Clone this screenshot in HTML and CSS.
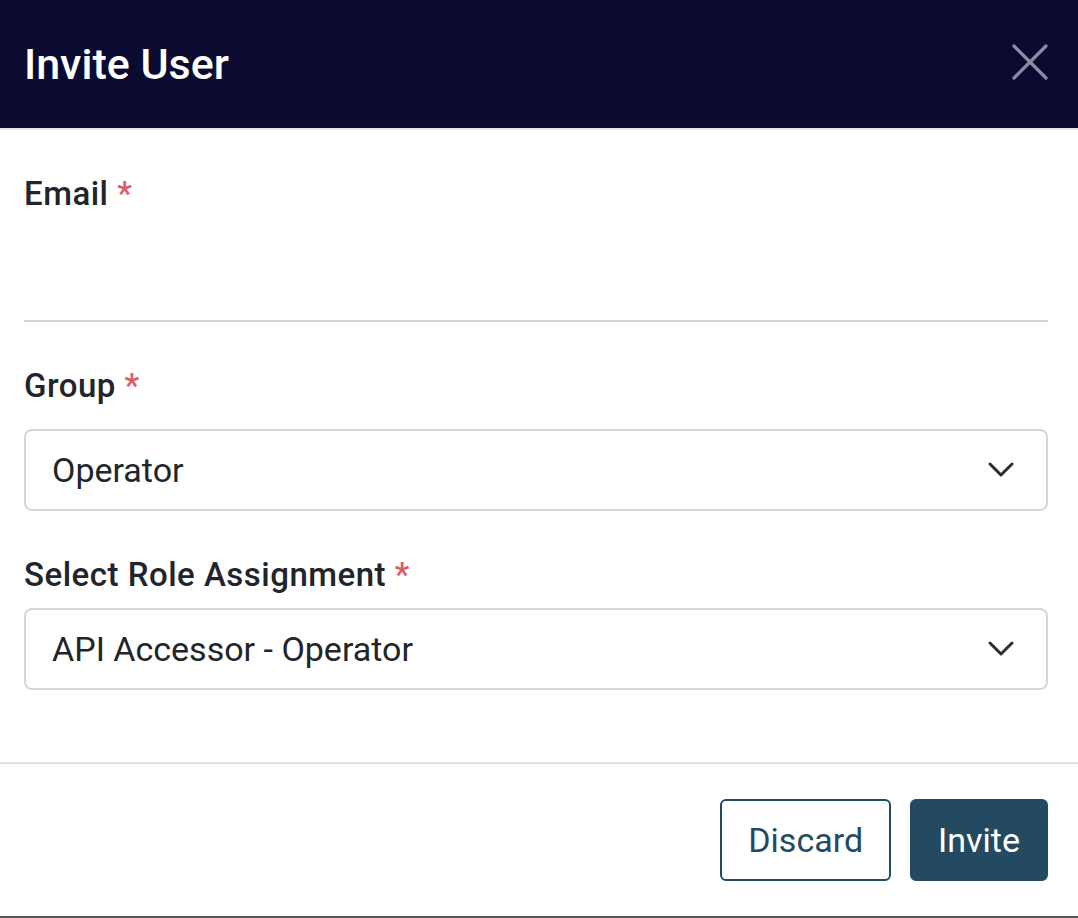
FILE: index.html
```html
<!DOCTYPE html>
<html lang="en">
<head>
  <meta charset="UTF-8">
  <meta name="viewport" content="width=device-width, initial-scale=1.0">
  <title>Invite User</title>
  <link rel="stylesheet" href="styles.css">
</head>
<body>

  <div class="modal">
    <div class="modal-header">
      <h1>Invite User</h1>
      <button type="button" class="close-btn" aria-label="Close">
        <svg width="36" height="36" viewBox="0 0 36 36">
          <path d="M2 2 L34 34 M34 2 L2 34" stroke="#8c8ca3" stroke-width="3.2" stroke-linecap="round" fill="none"/>
        </svg>
      </button>
    </div>

    <form class="modal-body" id="inviteForm">
      <div class="form-group">
        <label for="email">Email <span class="req">*</span></label>
        <input type="email" id="email" class="line-input">
      </div>

      <div class="form-group">
        <label class="spaced">Group <span class="req">*</span></label>
        <div class="select-box">
          <span>Operator</span>
          <svg class="chevron" width="26" height="16" viewBox="0 0 26 16">
            <path d="M2 2 L13 13 L24 2" stroke="#2b2f33" stroke-width="3" stroke-linecap="round" stroke-linejoin="round" fill="none"/>
          </svg>
        </div>
      </div>

      <div class="form-group">
        <label>Select Role Assignment <span class="req">*</span></label>
        <div class="select-box">
          <span>API Accessor - Operator</span>
          <svg class="chevron" width="26" height="16" viewBox="0 0 26 16">
            <path d="M2 2 L13 13 L24 2" stroke="#2b2f33" stroke-width="3" stroke-linecap="round" stroke-linejoin="round" fill="none"/>
          </svg>
        </div>
      </div>
    </form>

    <div class="modal-footer">
      <button type="button" class="btn btn-outline">Discard</button>
      <button type="submit" class="btn btn-primary" form="inviteForm">Invite</button>
    </div>
  </div>

</body>
</html>
```

FILE: styles.css
```css
body {
  margin: 0;
  font-family: Roboto, "Liberation Sans", sans-serif;
  background-color: #fff;
  color: #212529;
}
.modal {
  width: 1078px;
  height: 918px;
  border-bottom: 2px solid #555;
  box-sizing: border-box;
  display: flex;
  flex-direction: column;
}
.modal-header {
  height: 128px;
  background-color: #0b0a30;
  border-bottom: 2px solid #e3e6ea;
  display: flex;
  align-items: center;
  justify-content: space-between;
  padding: 0 30px 0 24px;
}
.modal-header h1 {
  margin: 0;
  color: #fff;
  font-size: 43px;
  font-weight: 500;
}
.close-btn {
  background: none;
  border: none;
  padding: 0;
  cursor: pointer;
  display: flex;
  margin-top: -4px;
}
.modal-body {
  padding: 44px 30px 0 24px;
  flex: 1;
}
.form-group {
  margin-bottom: 44px;
}
label {
  display: block;
  font-size: 33px;
  font-weight: 500;
  letter-spacing: 0.5px;
  line-height: 40px;
  margin-bottom: 13px;
}
label.spaced {
  margin-bottom: 23px;
}
.req {
  color: #e0596b;
}
.line-input {
  display: block;
  width: 100%;
  box-sizing: border-box;
  height: 95px;
  border: none;
  border-bottom: 2px solid #d0d4d9;
  outline: none;
  font-size: 34px;
  font-family: inherit;
}
.select-box {
  height: 82px;
  box-sizing: border-box;
  border: 2px solid #d3d7db;
  border-radius: 8px;
  display: flex;
  align-items: center;
  justify-content: space-between;
  padding: 0 32px 0 26px;
  font-size: 34px;
  color: #212529;
}
.modal-footer {
  border-top: 2px solid #dee2e6;
  display: flex;
  justify-content: flex-end;
  gap: 19px;
  padding: 35px 30px 0 0;
  height: 154px;
  box-sizing: border-box;
}
.btn {
  height: 82px;
  font-size: 34px;
  font-family: inherit;
  border-radius: 6px;
  padding: 0 26px;
  cursor: pointer;
}
.btn-outline {
  background-color: #fff;
  border: 2px solid #234a60;
  color: #234a60;
}
.btn-primary {
  background-color: #234a60;
  border: 2px solid #234a60;
  color: #fff;
}
```
